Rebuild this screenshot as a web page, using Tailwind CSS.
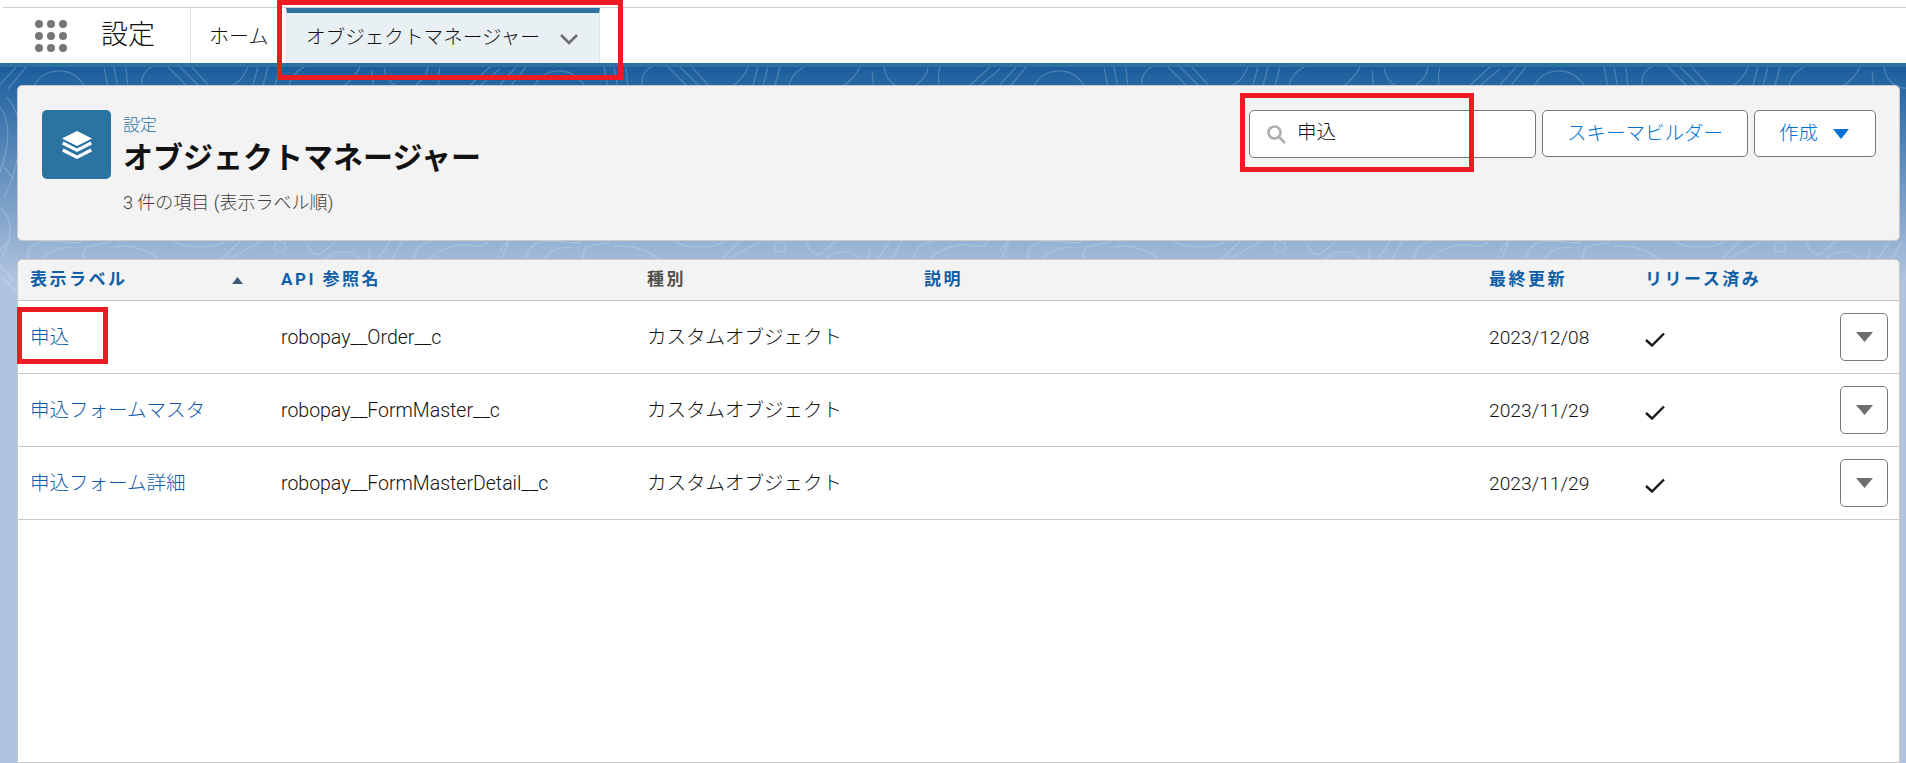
<!DOCTYPE html>
<html lang="ja">
<head>
    <meta charset="UTF-8">
    <title>オブジェクトマネージャー</title>
    <script src="https://cdn.jsdelivr.net/npm/@tailwindcss/browser@4"></script>
</head>
<body class="bg-white font-['Roboto','Noto_Sans_CJK_JP',sans-serif] text-[19.5px] text-[#111]">
<div class="relative flex flex-col h-[763px] overflow-hidden">

    <!-- Top nav -->
    <div class="h-[8px] ml-[3px] border-b border-[#d0d0d0]"></div>
    <div class="flex h-[55px] shrink-0">
        <div class="w-[191px] flex items-center border-r border-[#e0e0e0]">
            <div class="grid grid-cols-3 gap-[4px] ml-[35px] w-[32px]">
                <span class="w-[8px] h-[8px] rounded-full bg-[#777]"></span>
                <span class="w-[8px] h-[8px] rounded-full bg-[#777]"></span>
                <span class="w-[8px] h-[8px] rounded-full bg-[#777]"></span>
                <span class="w-[8px] h-[8px] rounded-full bg-[#777]"></span>
                <span class="w-[8px] h-[8px] rounded-full bg-[#777]"></span>
                <span class="w-[8px] h-[8px] rounded-full bg-[#777]"></span>
                <span class="w-[8px] h-[8px] rounded-full bg-[#777]"></span>
                <span class="w-[8px] h-[8px] rounded-full bg-[#777]"></span>
                <span class="w-[8px] h-[8px] rounded-full bg-[#777]"></span>
            </div>
            <span class="ml-[34px] text-[27px] font-light">設定</span>
        </div>
        <div class="w-[95px] pl-[18px] pt-[2px] flex items-center text-[20px] font-light">ホーム</div>
        <div class="w-[314px] flex items-center pl-[19px] bg-[#e9f0f4] border-t-[5px] border-t-[#2d72a0] border-x border-x-[#dfe5e8] text-[19.600px] font-light">
            <span>オブジェクトマネージャー</span>
            <svg class="ml-[20px] mt-[3px]" width="18" height="11" viewBox="0 0 18 11" fill="none" stroke="#706e6b" stroke-width="2.600"><path d="M1 1l8 8 8-8"/></svg>
        </div>
    </div>
    <div class="h-[4px] shrink-0 bg-[#2c72a0]"></div>

    <!-- Main area -->
    <div class="relative flex-1 pt-[18px] pl-[17px] pr-[6px] flex flex-col gap-[18px] bg-[linear-gradient(#1b5e9d_0px,#b0c4df_213px)]">
        <svg class="absolute left-0 top-0 w-full h-[240px]" fill="none" stroke="#fff" stroke-opacity="0.2" stroke-width="1.200">
            <defs>
                <pattern id="topo" width="500" height="240" patternUnits="userSpaceOnUse">
                    <path d="M-4 22L16 0M8 22L26 0M34 20C40 4 60 0 74 8C82 14 86 20 88 24M104 0L108 22M114 0L118 22M126 0L128 22M142 22C140 10 146 2 152 0M168 0L190 22M180 0L200 20M192 0L208 18C222 26 240 20 248 0M252 22L258 0M262 22L268 0M274 22L280 0M288 22C290 10 296 4 304 0M360 0C354 12 344 20 336 22M372 4L374 22M384 0C386 18 404 26 416 18C424 12 428 6 428 0M440 0C438 8 438 16 440 22M466 22L490 0M476 22L500 2"/>
                    <path d="M8 174L-6 192M28 192C26 180 36 174 50 174C64 174 78 178 82 174M44 192C48 184 60 180 72 180M84 192C82 184 84 180 94 178C104 176 110 176 110 174M114 180C130 176 150 184 158 192M174 174C186 182 212 182 226 174M222 192L240 174M232 190L262 174M274 180a6 5 0 1 0 12 0a6 5 0 1 0 -12 0M306 174C310 186 316 190 322 186L336 174M326 192C336 182 352 182 360 192M368 192L370 180M378 192L390 174M392 192L402 174M414 192C414 182 420 176 434 174M430 192C436 184 456 176 468 178C478 180 486 180 488 174"/>
                    <path d="M0 40C14 60 6 90 -2 110M6 30C28 50 20 100 4 130M0 140C12 150 14 170 2 190M4 100L14 112M-2 196L14 214M2 210L16 224"/>
                </pattern>
            </defs>
            <rect width="100%" height="100%" fill="url(#topo)" stroke="none"/>
        </svg>

        <!-- Page header -->
        <div class="relative shrink-0 h-[156px] flex justify-between bg-[#f3f3f3] border border-[#c9c9c9] rounded-[5px] pt-[24px] pl-[24px] pr-[23px]">
            <div class="flex">
                <div class="w-[69px] h-[69px] rounded-[5px] bg-[#2b74a1] flex items-center justify-center">
                    <svg width="30" height="28" viewBox="0 0 30 28" fill="#fff" stroke="none">
                        <path d="M15 0l15 7.500-15 7.500L0 7.500z"/>
                        <path d="M1.500 10.500l13.500 7 13.500-7 1.500 3L15 21 0 13.500z"/>
                        <path d="M1.500 17.500l13.500 7 13.500-7 1.500 3L15 28 0 20.500z"/>
                    </svg>
                </div>
                <div class="ml-[12px]">
                    <div class="text-[17px] leading-[17px] mt-[7px] text-[#2b74a7] font-light">設定</div>
                    <div class="text-[30px] leading-[32px] mt-[8px] font-bold">オブジェクトマネージャー</div>
                    <div class="text-[18px] leading-[18px] mt-[20px] font-light text-[#3e3e3c]">3 件の項目 (表示ラベル順)</div>
                </div>
            </div>
            <div class="flex gap-[6px] h-[48px]">
                <div class="w-[287px] h-[48px] bg-white border border-[#777] rounded-[5px] flex items-center pl-[17px]">
                    <svg width="19" height="19" viewBox="0 0 19 19" fill="none" stroke="#b0adab" stroke-width="2.500"><circle cx="7.500" cy="7.500" r="6"/><path d="M12 12l6 6"/></svg>
                    <span class="ml-[11px] font-light mb-[3px]">申込</span>
                </div>
                <div class="w-[206px] h-[47px] bg-white border border-[#777] rounded-[5px] flex items-center justify-center text-[#0070d2] font-light">スキーマビルダー</div>
                <div class="w-[122px] h-[47px] bg-white border border-[#777] rounded-[5px] flex items-center pl-[24px] text-[#0070d2] font-light">
                    <span>作成</span>
                    <svg class="ml-[15px]" width="16" height="10" viewBox="0 0 16 10" fill="#0070d2"><path d="M0 0h16L8 10z"/></svg>
                </div>
            </div>
        </div>

        <!-- Object table -->
        <div class="relative flex-1 bg-white border border-[#c9c9c9] rounded-t-[5px]">
            <div class="grid grid-cols-[251px_366px_277px_565px_156px_1fr] h-[41px] items-center pl-[12px] bg-[#f3f3f3] border-b border-[#c9c9c9] rounded-t-[5px] font-bold text-[17px] tracking-[2.500px] text-[#0f5fa8]">
                <div class="flex items-center justify-between pr-[38px]">
                    <span>表示ラベル</span>
                    <svg width="11" height="7" viewBox="0 0 11 7" fill="#3e5a78"><path d="M5.500 0L11 7H0z"/></svg>
                </div>
                <div>API 参照名</div>
                <div class="text-[#514f4d]">種別</div>
                <div>説明</div>
                <div>最終更新</div>
                <div>リリース済み</div>
            </div>

            <div class="grid grid-cols-[251px_366px_277px_565px_156px_1fr] h-[73px] items-center pl-[12px] border-b border-[#c9c9c9]">
                <div class="mt-[2px] text-[#0f5aa8] font-light">申込</div>
                <div class="mt-[2px] font-light">robopay__Order__c</div>
                <div class="mt-[2px] font-light">カスタムオブジェクト</div>
                <div></div>
                <div class="mt-[2px] text-[19.200px] font-light">2023/12/08</div>
                <div class="flex items-center justify-between pr-[11px]">
                    <svg class="mt-[4px]" width="20" height="15" viewBox="0 0 20 15" fill="none" stroke="#1a1a1a" stroke-width="2.400"><path d="M1 8l6 5.500L19 1.500"/></svg>
                    <div class="w-[48px] h-[48px] border border-[#777] rounded-[5px] flex items-center justify-center">
                        <svg width="17" height="10" viewBox="0 0 17 10" fill="#706e6b"><path d="M0 0h17L8.500 10z"/></svg>
                    </div>
                </div>
            </div>
            <div class="grid grid-cols-[251px_366px_277px_565px_156px_1fr] h-[73px] items-center pl-[12px] border-b border-[#c9c9c9]">
                <div class="mt-[2px] text-[#0f5aa8] font-light">申込フォームマスタ</div>
                <div class="mt-[2px] font-light">robopay__FormMaster__c</div>
                <div class="mt-[2px] font-light">カスタムオブジェクト</div>
                <div></div>
                <div class="mt-[2px] text-[19.200px] font-light">2023/11/29</div>
                <div class="flex items-center justify-between pr-[11px]">
                    <svg class="mt-[4px]" width="20" height="15" viewBox="0 0 20 15" fill="none" stroke="#1a1a1a" stroke-width="2.400"><path d="M1 8l6 5.500L19 1.500"/></svg>
                    <div class="w-[48px] h-[48px] border border-[#777] rounded-[5px] flex items-center justify-center">
                        <svg width="17" height="10" viewBox="0 0 17 10" fill="#706e6b"><path d="M0 0h17L8.500 10z"/></svg>
                    </div>
                </div>
            </div>
            <div class="grid grid-cols-[251px_366px_277px_565px_156px_1fr] h-[73px] items-center pl-[12px] border-b border-[#c9c9c9]">
                <div class="mt-[2px] text-[#0f5aa8] font-light">申込フォーム詳細</div>
                <div class="mt-[2px] font-light">robopay__FormMasterDetail__c</div>
                <div class="mt-[2px] font-light">カスタムオブジェクト</div>
                <div></div>
                <div class="mt-[2px] text-[19.200px] font-light">2023/11/29</div>
                <div class="flex items-center justify-between pr-[11px]">
                    <svg class="mt-[4px]" width="20" height="15" viewBox="0 0 20 15" fill="none" stroke="#1a1a1a" stroke-width="2.400"><path d="M1 8l6 5.500L19 1.500"/></svg>
                    <div class="w-[48px] h-[48px] border border-[#777] rounded-[5px] flex items-center justify-center">
                        <svg width="17" height="10" viewBox="0 0 17 10" fill="#706e6b"><path d="M0 0h17L8.500 10z"/></svg>
                    </div>
                </div>
            </div>
        </div>
    </div>

    <!-- Red annotation boxes drawn over the screenshot -->
    <div class="absolute left-[277px] top-0 w-[346px] h-[80px] border-[5px] border-[#ed1c24]"></div>
    <div class="absolute left-[1240px] top-[93px] w-[234px] h-[79px] border-[5px] border-[#ed1c24]"></div>
    <div class="absolute left-[17px] top-[307px] w-[91px] h-[57px] border-[5px] border-[#ed1c24]"></div>
</div>
</body>
</html>
